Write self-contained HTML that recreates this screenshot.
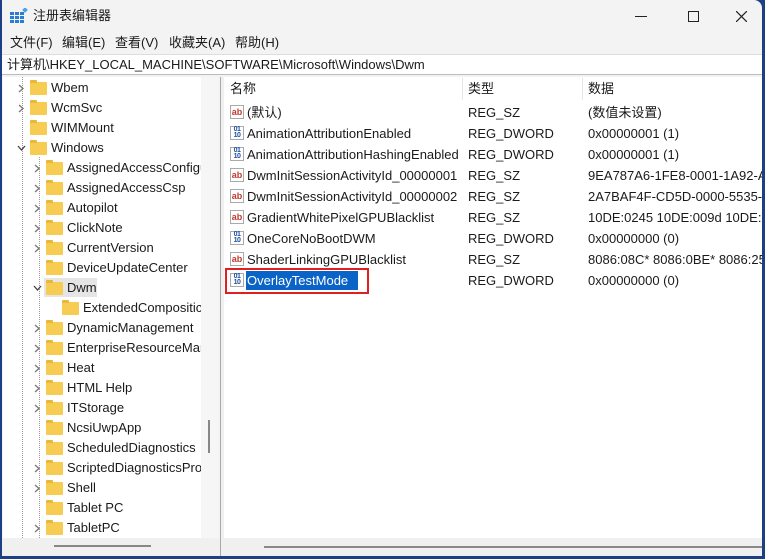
<!DOCTYPE html>
<html><head><meta charset="utf-8"><style>
*{margin:0;padding:0;box-sizing:border-box}
body{width:765px;height:559px;background:#1c3f86;position:relative;overflow:hidden;font-family:"Liberation Sans","Noto Sans CJK SC",sans-serif;font-size:13px;line-height:16px;color:#1a1a1a}
.win{position:absolute;left:2px;top:0;width:760px;height:556px;background:#f3f3f3;border-radius:0 8px 0 0;overflow:hidden}
.abs{position:absolute;white-space:nowrap;line-height:16px}
.tree{position:absolute;left:1px;top:77px;width:216px;height:461px;background:#fff}
.vs{position:absolute;left:198px;top:0;width:18px;height:461px;background:#f6f6f6}
.list{position:absolute;left:222px;top:77px;width:538px;height:461px;background:#fff}
.fold{position:absolute;width:17px;height:13px;background:#f6cc52;border-radius:1px}
.fold:before{content:"";position:absolute;left:0;top:-2px;width:7px;height:3px;background:#e9b73c;border-radius:1px 1px 0 0}
.ico{position:absolute;width:14px;height:14px;font-size:9px;font-weight:bold;line-height:12px;text-align:center;border:1px solid #aaa;background:#fff}
.ab{color:#c0392b}
.bin{color:#1a4fa0;font-size:7px;line-height:6px;letter-spacing:-.5px}
</style></head><body>
<div class="win">
<svg class="abs" style="left:8px;top:8px" width="18" height="16"><g fill="#2b7cd3"><rect x="0" y="4" width="4" height="3"/><rect x="5" y="4" width="4" height="3"/><rect x="10" y="4" width="4" height="3"/><rect x="0" y="8" width="4" height="3"/><rect x="5" y="8" width="4" height="3"/><rect x="10" y="8" width="4" height="3"/><rect x="0" y="12" width="4" height="3"/><rect x="5" y="12" width="4" height="3"/><rect x="10" y="12" width="4" height="3"/></g><rect x="13" y="0" width="4" height="4" fill="#4aa3e8" transform="rotate(45 15 2)"/></svg>
<div class="abs" style="left:31px;top:8px;font-size:13px">注册表编辑器</div>
<div class="abs" style="left:633px;width:12px;height:1px;top:16px;background:#222"></div>
<div class="abs" style="left:686px;top:11px;width:11px;height:11px;border:1.3px solid #222"></div>
<svg class="abs" style="left:734px;top:11px" width="11" height="11"><path d="M0 0L11 11M11 0L0 11" stroke="#222" stroke-width="1.2"/></svg>
<div class="abs" style="left:8px;top:35px">文件(F)</div>
<div class="abs" style="left:60px;top:35px">编辑(E)</div>
<div class="abs" style="left:113px;top:35px">查看(V)</div>
<div class="abs" style="left:167px;top:35px">收藏夹(A)</div>
<div class="abs" style="left:233px;top:35px">帮助(H)</div>
<div class="abs" style="left:0;top:54px;width:760px;height:21px;background:#fff;border-top:1px solid #ddd;border-bottom:1px solid #bbb"></div>
<div class="abs" style="left:5px;top:57px">计算机\HKEY_LOCAL_MACHINE\SOFTWARE\Microsoft\Windows\Dwm</div>
<div class="tree">
<div class="vs"><div class="abs" style="left:7px;top:343px;width:2px;height:33px;background:#888"></div></div>
<div class="abs" style="left:19px;top:0;height:461px;border-left:1px dotted #999"></div>
<div class="abs" style="left:36px;top:80px;height:381px;border-left:1px dotted #999"></div>
</div>
<div class="abs" style="left:0;top:538px;width:218px;height:18px;background:#f0f0f0"><div class="abs" style="left:52px;top:7px;width:97px;height:2px;background:#888"></div></div>
<div class="abs" style="left:218px;top:77px;width:4px;height:479px;background:#f0f0f0;border-left:1px solid #aaa"></div>
<div id="t" style="position:absolute;left:0;top:0;width:199px;height:538px;overflow:hidden"></div>
<div class="list"></div>
<div class="abs" style="left:222px;top:538px;width:538px;height:18px;background:#f0f0f0"><div class="abs" style="left:40px;top:8px;width:498px;height:2px;background:#888"></div></div>
<div class="abs" style="left:228px;top:81px">名称</div>
<div class="abs" style="left:466px;top:81px">类型</div>
<div class="abs" style="left:586px;top:81px">数据</div>
<div class="abs" style="left:460px;top:78px;width:1px;height:22px;background:#e5e5e5"></div>
<div class="abs" style="left:580px;top:78px;width:1px;height:22px;background:#e5e5e5"></div>
<div id="l"></div>
<div class="abs" style="left:223px;top:268px;width:144px;height:26px;border:2px solid #e02020"></div>
</div>
<script>
var T=[["Wbem",1,">"],["WcmSvc",1,">"],["WIMMount",1,""],["Windows",1,"v"],["AssignedAccessConfigu",2,">"],["AssignedAccessCsp",2,">"],["Autopilot",2,">"],["ClickNote",2,">"],["CurrentVersion",2,">"],["DeviceUpdateCenter",2,""],["Dwm",2,"v"],["ExtendedCompositic",3,""],["DynamicManagement",2,">"],["EnterpriseResourceMar",2,">"],["Heat",2,">"],["HTML Help",2,">"],["ITStorage",2,">"],["NcsiUwpApp",2,""],["ScheduledDiagnostics",2,""],["ScriptedDiagnosticsPro",2,">"],["Shell",2,">"],["Tablet PC",2,""],["TabletPC",2,">"]];
var h="";T.forEach(function(r,i){var y=78+i*20,lv=r[1],fx=lv==1?28:lv==2?44:60,cx=fx-12;
if(r[0]=="Dwm")h+='<div class="abs" style="left:42px;top:'+(y)+'px;width:53px;height:19px;background:#e5e5e5"></div>';
if(r[2]==">")h+='<svg class="abs" style="left:'+cx+'px;top:'+(y+6)+'px" width="6" height="9"><path d="M1 1L5 4.5L1 8" fill="none" stroke="#777" stroke-width="1.3"/></svg>';
if(r[2]=="v")h+='<svg class="abs" style="left:'+(cx-1)+'px;top:'+(y+7)+'px" width="9" height="6"><path d="M1 1L4.5 5L8 1" fill="none" stroke="#444" stroke-width="1.3"/></svg>';
h+='<div class="fold" style="left:'+fx+'px;top:'+(y+4)+'px"></div><div class="abs" style="left:'+(fx+21)+'px;top:'+(y+2)+'px">'+r[0]+'</div>';});
document.getElementById("t").innerHTML=h;
var L=[["(默认)","REG_SZ","(数值未设置)",1],["AnimationAttributionEnabled","REG_DWORD","0x00000001 (1)",0],["AnimationAttributionHashingEnabled","REG_DWORD","0x00000001 (1)",0],["DwmInitSessionActivityId_00000001","REG_SZ","9EA787A6-1FE8-0001-1A92-A7",1],["DwmInitSessionActivityId_00000002","REG_SZ","2A7BAF4F-CD5D-0000-5535-7",1],["GradientWhitePixelGPUBlacklist","REG_SZ","10DE:0245 10DE:009d 10DE:0",1],["OneCoreNoBootDWM","REG_DWORD","0x00000000 (0)",0],["ShaderLinkingGPUBlacklist","REG_SZ","8086:08C* 8086:0BE* 8086:258",1],["OverlayTestMode","REG_DWORD","0x00000000 (0)",0]];
h="";L.forEach(function(r,i){var y=102+i*21;
h+=r[3]?'<div class="ico ab" style="left:228px;top:'+(y+3)+'px">ab</div>':'<div class="ico bin" style="left:228px;top:'+(y+3)+'px">01<br>10</div>';
if(i==8)h+='<div class="abs" style="left:244px;top:'+(y+1)+'px;width:112px;height:19px;background:#0a64c8"></div>';
h+='<div class="abs" style="left:245px;top:'+(y+3)+'px;'+(i==8?'color:#fff':'')+'">'+r[0]+'</div><div class="abs" style="left:466px;top:'+(y+3)+'px">'+r[1]+'</div><div class="abs" style="left:586px;top:'+(y+3)+'px;width:174px;overflow:hidden">'+r[2]+'</div>';});
document.getElementById("l").innerHTML=h;
</script>
</body></html>
